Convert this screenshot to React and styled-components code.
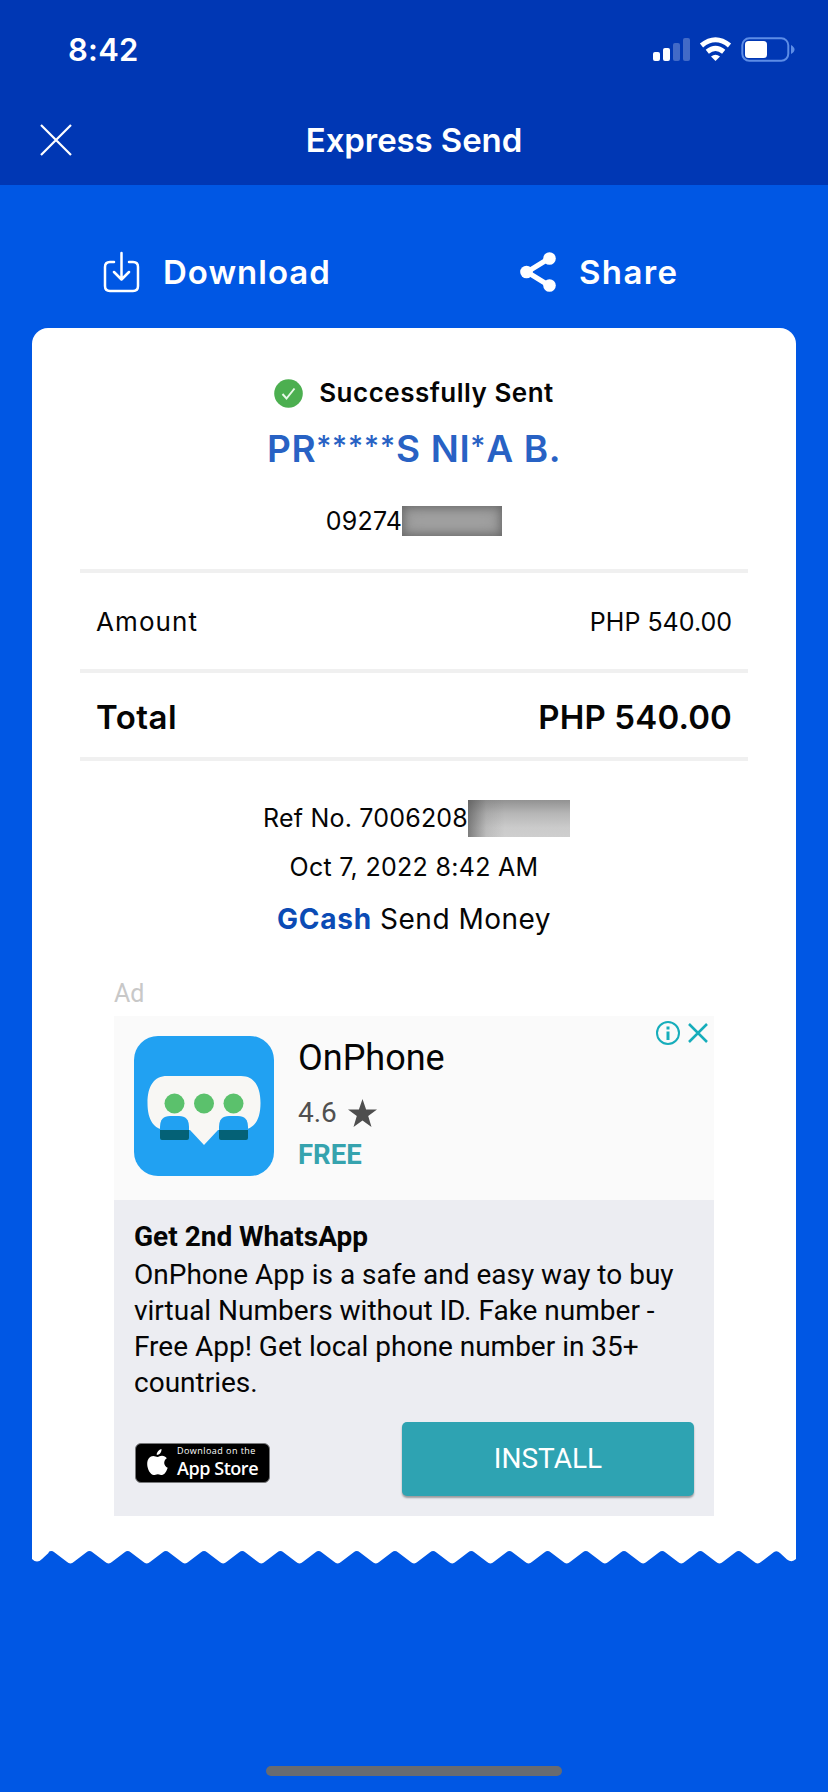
import React from "react";
import styled, { createGlobalStyle } from "styled-components";

const Global = createGlobalStyle`
  * { box-sizing: border-box; }
  body { margin: 0; background: #0057e4; }
  svg { display: block; flex: none; }
`;

const Screen = styled.div`
  width: 828px;
  height: 1792px;
  display: flex;
  flex-direction: column;
  background: #0057e4;
  font-family: Inter, "Liberation Sans", sans-serif;
  color: #050505;
  overflow: hidden;
`;

const Header = styled.header`
  height: 185px;
  flex: none;
  background: #0037b4;
  color: #fff;
`;

const StatusBar = styled.div`
  height: 98px;
  display: flex;
  justify-content: space-between;
  padding: 0 34px 0 68px;
`;

const StatusIcons = styled.div`
  display: flex;
  padding-top: 36px;
`;

const TitleBar = styled.div`
  height: 84px;
  display: grid;
  grid-template-columns: 100px 1fr 100px;
  align-items: center;
  justify-items: center;
`;

const CloseButton = styled.button`
  border: 0;
  padding: 0;
  background: none;
  margin-left: 11px;
`;

const Label = styled.span`
  font-family: ${(p) => p.$font || "inherit"};
  font-size: ${(p) => p.$size}px;
  line-height: ${(p) => p.$line || 40}px;
  font-weight: ${(p) => p.$weight || 400};
  letter-spacing: ${(p) => p.$track || 0}px;
  color: ${(p) => p.$color || "inherit"};
  white-space: nowrap;
`;

const Clock = styled(Label)`
  padding-top: 30px;
`;

const Stars = styled.span`
  font-size: 29px;
  font-weight: 500;
  line-height: 0;
  letter-spacing: 0.9px;
  vertical-align: 6px;
`;

const Actions = styled.nav`
  height: 143px;
  flex: none;
  display: grid;
  grid-template-columns: 414px 414px;
  color: #fff;
`;

const Action = styled.button`
  display: flex;
  align-items: flex-start;
  gap: ${(p) => p.$gap}px;
  padding: 65px 0 0 ${(p) => p.$inset}px;
  border: 0;
  background: none;
  color: inherit;
  font-family: inherit;
`;

const ActionLabel = styled(Label)`
  padding-top: 2px;
`;

const Receipt = styled.main`
  width: 764px;
  height: 1223px;
  margin: 0 auto;
  flex: none;
  display: flex;
  flex-direction: column;
  align-items: center;
  background: #fff;
  border-radius: 16px 16px 0 0;
`;

const Edge = styled.svg`
  width: 764px;
  height: 16px;
  margin: -1px auto 0;
`;

const Line = styled.div`
  display: flex;
  align-items: center;
  height: ${(p) => p.$height}px;
  margin-top: ${(p) => p.$top || 0}px;
  padding-left: ${(p) => p.$inset || 0}px;
  gap: ${(p) => p.$gap || 0}px;
`;

const Mask = styled.span`
  width: ${(p) => p.$width}px;
  height: ${(p) => p.$height}px;
`;

const PhoneMask = styled(Mask)`
  background: #a2a2a2;
  box-shadow: inset 0 0 10px 1px #686868, inset 0 0 18px 1px #8a8a8a;
`;

const RefMask = styled(Mask)`
  background:
    linear-gradient(90deg, rgba(70, 70, 70, 0.6), rgba(110, 110, 110, 0.18) 18%, transparent 36%),
    linear-gradient(180deg, #929292, #b5b5b5 35%, #cbcbcb 75%, #cecece);
`;

const Row = styled.div`
  width: 668px;
  height: ${(p) => p.$height}px;
  padding: ${(p) => p.$drop}px 16px 0;
  display: flex;
  align-items: center;
  justify-content: space-between;
  border-top: ${(p) => (p.$first ? 4 : 0)}px solid #f0f0f0;
  border-bottom: 4px solid #f0f0f0;
`;

const Sponsor = styled.section`
  width: 600px;
  margin-top: 35px;
  display: flex;
  flex-direction: column;
  font-family: Roboto, "Liberation Sans", sans-serif;
`;

const AdTag = styled(Label)`
  height: 42px;
`;

const AppHead = styled.div`
  height: 184px;
  padding: 20px 0 0 20px;
  display: flex;
  background: #fafafa;
`;

const AppInfo = styled.div`
  flex: 1;
  padding-left: 24px;
  display: flex;
  flex-direction: column;
`;

const Rating = styled.div`
  display: flex;
  align-items: center;
  gap: 11px;
  height: 43px;
  margin-top: 11px;
  margin-bottom: 1px;
`;

const AdChoices = styled.div`
  display: flex;
  align-items: center;
  gap: 8px;
  height: 26px;
  margin: -16px 6px 0 0;
`;

const AppBody = styled.div`
  height: 316px;
  padding: 18px 20px 0;
  background: #ecedf2;
`;

const Heading = styled(Label)`
  display: block;
  margin-bottom: 1px;
`;

const Copy = styled.p`
  margin: 0;
  font-size: 28px;
  line-height: 36px;
  white-space: pre-line;
`;

const Footer = styled.div`
  display: flex;
  align-items: center;
  justify-content: space-between;
  margin-top: 21px;
`;

const StoreBadge = styled.div`
  width: 135px;
  height: 40px;
  margin: 7px 0 0 1px;
  padding-left: 11px;
  display: flex;
  align-items: center;
  gap: 9px;
  border: 1px solid #77787a;
  border-radius: 6px;
  background: #000;
  color: #fff;
`;

const BadgeText = styled.div`
  display: flex;
  flex-direction: column;
`;

const Install = styled.button`
  width: 292px;
  height: 74px;
  border: 0;
  border-radius: 5px;
  background: #2ea3b2;
  box-shadow: 0 2px 2px rgba(0, 0, 0, 0.35);
  color: #fff;
  font-family: inherit;
`;

const HomeIndicator = styled.div`
  width: 296px;
  height: 10px;
  margin: auto auto 16px;
  border-radius: 5px;
  background: #686b70;
`;

const badgeFont = '"Open Sans", sans-serif';

function edgePath() {
  let d = "M0 0V9Q5 14 10 9L17 2.5";
  for (let x = 19.3; x < 740; x += 38.18) {
    d += `L${x - 3} 2.2Q${x} -0.4 ${x + 3} 2.2L${x + 15.5} 11.8Q${x + 19.1} 15 ${x + 22.7} 11.8`;
  }
  return d + "L742 2Q745 0 748 3L755 9.5Q760 13 764 9V0Z";
}

function StatusGlyphs() {
  return (
    <svg width="160" height="28" viewBox="0 0 160 28" overflow="visible">
      <g fill="#fff" transform="translate(19 0)">
        <rect x="0" y="16" width="7" height="9" rx="2" />
        <rect x="10" y="12" width="7" height="13" rx="2" />
        <rect x="20" y="7" width="7" height="18" rx="2" opacity=".26" />
        <rect x="30" y="2" width="7" height="23" rx="2" opacity=".26" />
      </g>
      <g fill="none" stroke="#fff" strokeWidth="5">
        <path d="M67.500 9.500Q81.500 -2 95.500 9.500" />
        <path d="M73.300 15.700Q81.500 9 89.700 15.700" />
      </g>
      <path d="M77 20.500Q81.500 17 86 20.500L81.500 25Z" fill="#fff" />
      <rect x="108.300" y="2.300" width="46" height="22.500" rx="7" fill="none" stroke="#5d8de6" strokeWidth="2" />
      <rect x="111" y="5" width="22" height="17" rx="3.500" fill="#fff" />
      <path d="M157 9Q160.500 11 160.500 13.500T157 18Z" fill="#5d8de6" />
    </svg>
  );
}

function AppLogo() {
  return (
    <svg width="140" height="140" viewBox="0 0 140 140">
      <rect width="140" height="140" rx="24" fill="#21a1f2" />
      <path d="M33 40H107C120 40 126.500 50 126.500 67S120 94 107 94H84L70 109L56 94H33C20 94 13.500 84 13.500 67S20 40 33 40Z" fill="#f8f7f4" />
      <g fill="#5bc16c">
        <circle cx="40.500" cy="67.500" r="10" />
        <circle cx="70" cy="67.500" r="10" />
        <circle cx="99.500" cy="67.500" r="10" />
      </g>
      <g fill="#21a1f2">
        <path d="M26 95V91Q26 80 36 80H45Q55 80 55 91V95Z" />
        <path d="M85 95V91Q85 80 95 80H104Q114 80 114 91V95Z" />
      </g>
      <path d="M26 94H55V102Q55 104 53 104H28Q26 104 26 102ZM85 94H114V102Q114 104 112 104H87Q85 104 85 102Z" fill="#046176" />
    </svg>
  );
}

export default function App() {
  return (
    <Screen>
      <Global />
      <Header>
        <StatusBar>
          <Clock $size={31} $weight={600} $track={0.2}>8:42</Clock>
          <StatusIcons><StatusGlyphs /></StatusIcons>
        </StatusBar>
        <TitleBar>
          <CloseButton aria-label="Close">
            <svg width="32" height="32" viewBox="0 0 32 32" stroke="#fff" strokeWidth="2.200">
              <path d="M1 1L31 31M31 1L1 31" />
            </svg>
          </CloseButton>
          <Label $size={33} $weight={600} $track={-0.1}>Express Send</Label>
        </TitleBar>
      </Header>

      <Actions>
        <Action $inset={103} $gap={23}>
          <svg width="37" height="44" viewBox="0 0 37 44" fill="none" stroke="#fff" strokeWidth="2.500" strokeLinecap="round" strokeLinejoin="round">
            <path d="M11 12H7Q2 12 2 17V36Q2 41 7 41H30Q35 41 35 36V17Q35 12 30 12H26" />
            <path d="M18.500 3V29M11 22L18.500 29.500L26 22" />
          </svg>
          <ActionLabel $size={33} $weight={600} $track={1}>Download</ActionLabel>
        </Action>
        <Action $inset={105} $gap={22}>
          <svg width="38" height="44" viewBox="0 0 38 44">
            <path d="M30 8.500L8 22L30 35.500" fill="none" stroke="#fff" strokeWidth="5" />
            <g fill="#fff">
              <circle cx="30.500" cy="8.500" r="6.300" />
              <circle cx="7.500" cy="22" r="6.300" />
              <circle cx="30.500" cy="35.500" r="6.300" />
            </g>
          </svg>
          <ActionLabel $size={33} $weight={600} $track={1.4}>Share</ActionLabel>
        </Action>
      </Actions>

      <Receipt>
        <Line $top={45} $height={40} $gap={16}>
          <svg width="29" height="29" viewBox="0 0 29 29">
            <circle cx="14.500" cy="14.500" r="14.300" fill="#4caf50" />
            <path d="M8.500 15L12.500 19.500L20.500 9.500" fill="none" stroke="#e8f8e8" strokeWidth="2" />
          </svg>
          <Label $size={26} $weight={600} $track={0.5}>Successfully Sent</Label>
        </Line>
        <Line $top={14} $height={44}>
          <Label $size={37} $weight={600} $track={0.6} $color="#2862c4">
            PR<Stars>*****</Stars>S NI<Stars>*</Stars>A B.
          </Label>
        </Line>
        <Line $top={35} $height={30}>
          <Label $size={25} $track={0.2}>09274</Label>
          <PhoneMask $width={100} $height={30} />
        </Line>
        <Line $height={33} />
        <Row $first $height={104} $drop={2}>
          <Label $size={26} $track={1.1}>Amount</Label>
          <Label $size={25}>PHP 540.00</Label>
        </Row>
        <Row $height={88} $drop={4}>
          <Label $size={33} $weight={600} $track={0.5}>Total</Label>
          <Label $size={33} $weight={600} $track={0.15}>PHP 540.00</Label>
        </Row>
        <Line $top={38} $height={38} $inset={5}>
          <Label $size={25} $track={0.2}>Ref No. 7006208</Label>
          <RefMask $width={102} $height={37} />
        </Line>
        <Line $top={10} $height={40}>
          <Label $size={25} $track={0.3}>Oct 7, 2022 8:42 AM</Label>
        </Line>
        <Line $top={12} $height={40} $gap={8}>
          <Label $size={28} $weight={700} $track={0.8} $color="#0b4bb5">GCash</Label>
          <Label $size={28} $track={0.5}>Send Money</Label>
        </Line>

        <Sponsor>
          <AdTag $size={25} $color="#c8c8c8">Ad</AdTag>
          <AppHead>
            <AppLogo />
            <AppInfo>
              <Label $size={36} $line={44}>OnPhone</Label>
              <Rating>
                <Label $size={28} $color="#505050">4.6</Label>
                <svg width="29" height="28" viewBox="0 0 29 28" fill="#4e4e4e">
                  <path d="M14.500 0L18.100 10.500H29L20.200 17L23.500 28L14.500 21.400L5.500 28L8.800 17L0 10.500H10.900Z" />
                </svg>
              </Rating>
              <Label $size={27.5} $weight={700} $color="#36a3ae">FREE</Label>
            </AppInfo>
            <AdChoices>
              <svg width="24" height="24" viewBox="0 0 24 24">
                <circle cx="12" cy="12" r="11" fill="none" stroke="#16adbb" strokeWidth="2" />
                <path d="M12 5.500V8.500M12 10.500V19" stroke="#16adbb" strokeWidth="3" />
              </svg>
              <svg width="20" height="20" viewBox="0 0 20 20">
                <path d="M1 1L19 19M19 1L1 19" stroke="#16adbb" strokeWidth="2.500" />
              </svg>
            </AdChoices>
          </AppHead>
          <AppBody>
            <Heading $size={28} $weight={700} $line={38}>Get 2nd WhatsApp</Heading>
            <Copy>{"OnPhone App is a safe and easy way to buy\nvirtual Numbers without ID. Fake number -\nFree App! Get local phone number in 35+\ncountries."}</Copy>
            <Footer>
              <StoreBadge>
                <svg width="21" height="27" viewBox="0 0 21 27" fill="#fff">
                  <path d="M14.500 0C14.800 3 12.500 6 9.800 6C9.400 3.500 12 .5 14.500 0ZM10.500 8C11.800 8 13 6.800 15 6.800C17 6.800 18.800 7.800 19.800 9.300C16 11.800 16.500 17 20.700 18.800C19.500 22.500 17.300 26 15 26C13.500 26 12.700 25.200 10.900 25.200C9 25.200 8 26 6.700 26C3.500 26 .2 20 .2 15C.2 9.800 3.200 7 6.200 7C8.100 7 9.300 8 10.500 8Z" />
                </svg>
                <BadgeText>
                  <Label $font={badgeFont} $size={9} $line={12} $weight={500} $track={0.45}>Download on the</Label>
                  <Label $font={badgeFont} $size={18} $line={23} $weight={600} $track={-0.45}>App Store</Label>
                </BadgeText>
              </StoreBadge>
              <Install><Label $size={28}>INSTALL</Label></Install>
            </Footer>
          </AppBody>
        </Sponsor>
      </Receipt>
      <Edge viewBox="0 0 764 16"><path d={edgePath()} fill="#fff" /></Edge>
      <HomeIndicator />
    </Screen>
  );
}
